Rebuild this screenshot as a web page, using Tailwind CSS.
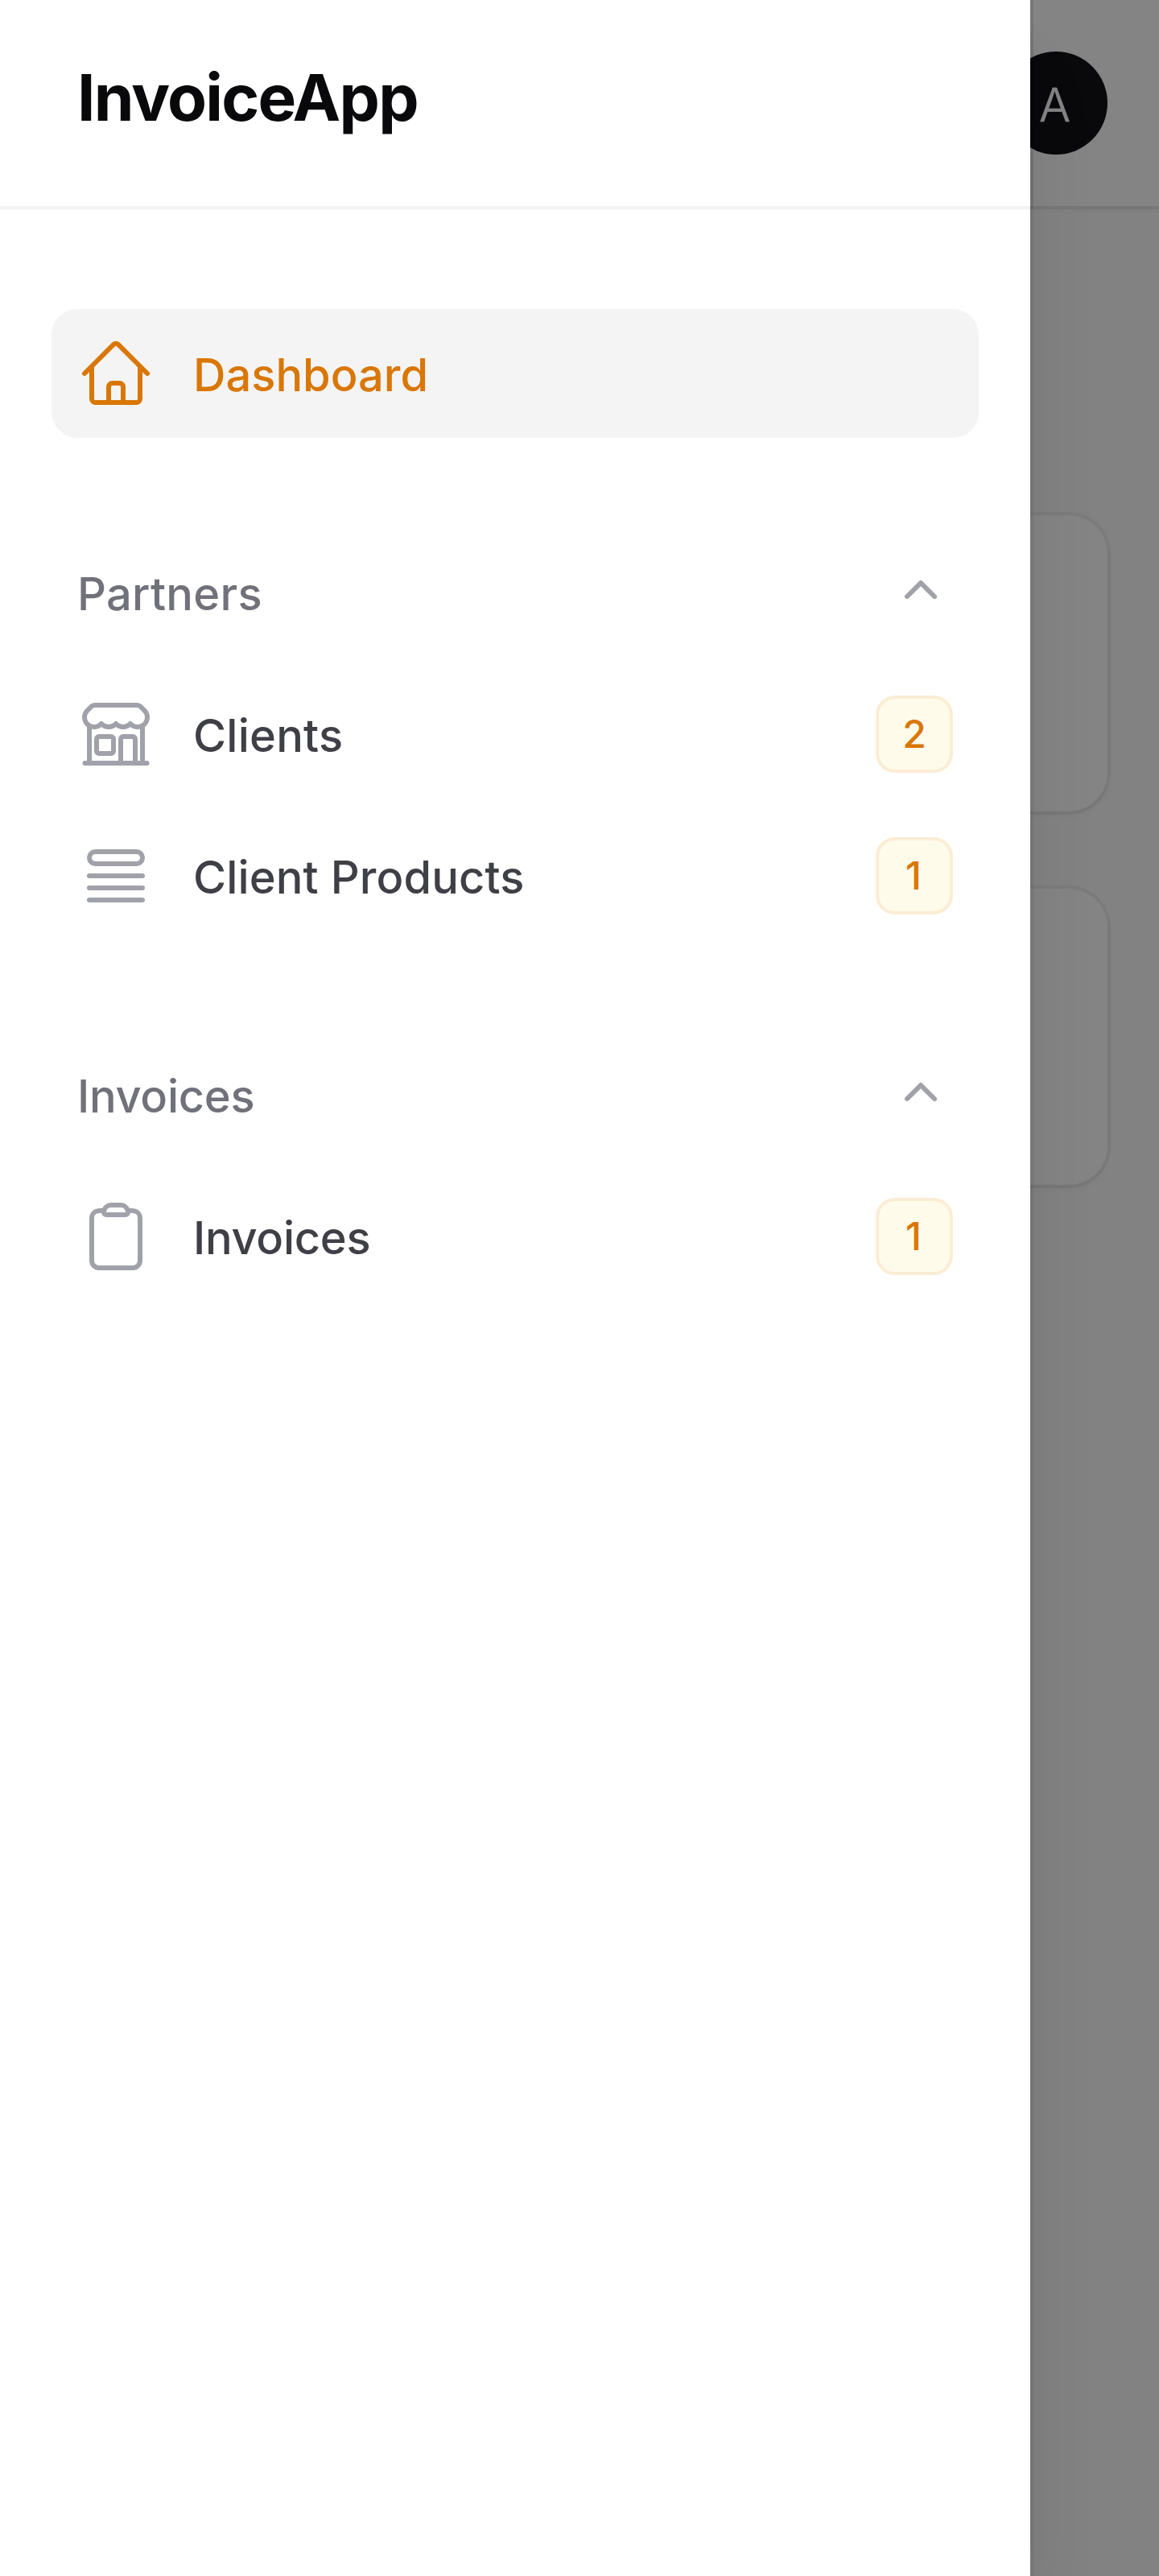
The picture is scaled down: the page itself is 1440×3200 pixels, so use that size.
<!DOCTYPE html>
<html lang="en">
<head>
<meta charset="utf-8">
<title>Dashboard - InvoiceApp</title>
<script src="https://cdn.jsdelivr.net/npm/@tailwindcss/browser@4"></script>
</head>
<body class="relative h-[3200px] w-[1440px] overflow-hidden bg-[#fafafa] font-['Inter',sans-serif] text-[#09090b] antialiased">

  <!-- Page behind the menu -->
  <header class="flex h-64 items-center justify-end bg-white px-16 shadow-[0_0_0_4px_rgba(9,9,11,0.05),0_4px_8px_0_rgba(0,0,0,0.05)]">
    <div class="flex size-32 items-center justify-center rounded-full bg-[#09090b] pt-[3px] pr-[3px] text-[58px] leading-none font-light text-white [-webkit-text-stroke:0.6px_white]">A</div>
  </header>
  <main class="flex flex-col gap-24 px-16 pt-96">
    <section class="h-[368px] rounded-[48px] bg-white shadow-[0_0_0_4px_rgba(9,9,11,0.05),0_4px_8px_0_rgba(0,0,0,0.05)]"></section>
    <section class="h-[368px] rounded-[48px] bg-white shadow-[0_0_0_4px_rgba(9,9,11,0.05),0_4px_8px_0_rgba(0,0,0,0.05)]"></section>
  </main>

  <div class="absolute inset-0 bg-[#09090b]/50"></div>

  <!-- Sidebar -->
  <aside class="absolute inset-y-0 left-0 flex w-[1280px] flex-col bg-white shadow-[0_0_0_4px_rgba(9,9,11,0.05),0_80px_100px_-20px_rgba(0,0,0,0.1),0_32px_40px_-24px_rgba(0,0,0,0.1)]">
    <header class="flex h-64 shrink-0 items-center px-24 pb-3.5 shadow-[0_0_0_4px_rgba(9,9,11,0.05)]">
      <div class="text-[80px] leading-[80px] font-bold tracking-[-1.8px]">InvoiceApp</div>
    </header>

    <nav class="flex flex-col gap-28 px-16 py-32 text-[56px] leading-[100px] font-medium text-[#3f3f46]">
      <a class="flex items-center gap-12 rounded-[32px] bg-[#f4f4f5] p-8 text-[#d97706]">
        <svg class="size-24" viewBox="0 0 24 24" fill="none" stroke="currentColor" stroke-width="1.5" stroke-linecap="round" stroke-linejoin="round"><path d="m2.25 12 8.954-8.955c.44-.439 1.152-.439 1.591 0L21.75 12M4.5 9.75v10.125c0 .621.504 1.125 1.125 1.125H9.75v-4.875c0-.621.504-1.125 1.125-1.125h2.25c.621 0 1.125.504 1.125 1.125V21h4.125c.621 0 1.125-.504 1.125-1.125V9.75M8.25 21h8.25"/></svg>
        <span class="h-24 flex-1">Dashboard</span>
      </a>

      <section class="flex flex-col gap-4">
        <div class="flex items-center p-8 text-[#71717a]">
          <span class="h-24 flex-1 tracking-[0.3px]">Partners</span>
          <svg class="size-20 text-[#a1a1aa]" viewBox="0 0 20 20" fill="currentColor"><path d="M9.47 6.47a.75.75 0 0 1 1.06 0l4.25 4.25a.75.75 0 1 1-1.06 1.06L10 8.06l-3.72 3.72a.75.75 0 0 1-1.06-1.06l4.25-4.25Z"/></svg>
        </div>
        <a class="flex items-center gap-12 p-8">
          <svg class="size-24 text-[#a1a1aa]" viewBox="0 0 24 24" fill="none" stroke="currentColor" stroke-width="1.5" stroke-linecap="round" stroke-linejoin="round"><path d="M13.5 21v-7.5a.75.75 0 0 1 .75-.75h3a.75.75 0 0 1 .75.75V21m-4.5 0H2.36m11.14 0H18m0 0h3.64m-1.39 0V9.349M3.75 21V9.349m0 0a3.001 3.001 0 0 0 3.75-.615A2.993 2.993 0 0 0 9.75 9.75c.896 0 1.7-.393 2.25-1.016a2.993 2.993 0 0 0 2.25 1.016c.896 0 1.7-.393 2.25-1.015a3.001 3.001 0 0 0 3.75.614m-16.5 0a3.004 3.004 0 0 1-.621-4.72l1.189-1.19A1.5 1.5 0 0 1 5.378 3h13.243a1.5 1.5 0 0 1 1.06.44l1.19 1.189a3 3 0 0 1-.621 4.72M6.75 18h3.75a.75.75 0 0 0 .75-.75V13.5a.75.75 0 0 0-.75-.75H6.75a.75.75 0 0 0-.75.75v3.75c0 .414.336.75.75.75Z"/></svg>
          <span class="h-24 flex-1 tracking-[0.25px]">Clients</span>
          <span class="flex size-24 items-center justify-center rounded-[24px] bg-[#fffbeb] text-[48px] leading-[64px] text-[#d97706] inset-ring-4 inset-ring-[#d97706]/10">2</span>
        </a>
        <a class="flex items-center gap-12 p-8">
          <svg class="size-24 text-[#a1a1aa]" viewBox="0 0 24 24" fill="none" stroke="currentColor" stroke-width="1.5" stroke-linecap="round" stroke-linejoin="round"><path d="M3.75 12h16.5m-16.5 3.75h16.5M3.75 19.5h16.5M5.625 4.5h12.75a1.875 1.875 0 0 1 0 3.75H5.625a1.875 1.875 0 0 1 0-3.75Z"/></svg>
          <span class="h-24 flex-1 tracking-[0.13px]">Client Products</span>
          <span class="flex size-24 items-center justify-center rounded-[24px] bg-[#fffbeb] pr-0.5 text-[48px] leading-[64px] text-[#d97706] inset-ring-4 inset-ring-[#d97706]/10">1</span>
        </a>
      </section>

      <section class="flex flex-col gap-4">
        <div class="flex items-center p-8 text-[#71717a]">
          <span class="h-24 flex-1 tracking-[-0.28px]">Invoices</span>
          <svg class="size-20 text-[#a1a1aa]" viewBox="0 0 20 20" fill="currentColor"><path d="M9.47 6.47a.75.75 0 0 1 1.06 0l4.25 4.25a.75.75 0 1 1-1.06 1.06L10 8.06l-3.72 3.72a.75.75 0 0 1-1.06-1.06l4.25-4.25Z"/></svg>
        </div>
        <a class="flex items-center gap-12 p-8">
          <svg class="size-24 text-[#a1a1aa]" viewBox="0 0 24 24" fill="none" stroke="currentColor" stroke-width="1.5" stroke-linecap="round" stroke-linejoin="round"><path d="M15.666 3.888A2.25 2.25 0 0 0 13.5 2.25h-3c-1.03 0-1.9.693-2.166 1.638m7.332 0c.055.194.084.4.084.612v0a.75.75 0 0 1-.75.75H9a.75.75 0 0 1-.75-.75v0c0-.212.03-.418.084-.612m7.332 0c.646.049 1.288.11 1.927.184 1.1.128 1.907 1.077 1.907 2.185V19.5a2.25 2.25 0 0 1-2.25 2.25H6.75A2.25 2.25 0 0 1 4.5 19.5V6.257c0-1.108.806-2.057 1.907-2.185a48.208 48.208 0 0 1 1.927-.184"/></svg>
          <span class="h-24 flex-1 tracking-[-0.28px]">Invoices</span>
          <span class="flex size-24 items-center justify-center rounded-[24px] bg-[#fffbeb] pr-0.5 text-[48px] leading-[64px] text-[#d97706] inset-ring-4 inset-ring-[#d97706]/10">1</span>
        </a>
      </section>
    </nav>
  </aside>
</body>
</html>
